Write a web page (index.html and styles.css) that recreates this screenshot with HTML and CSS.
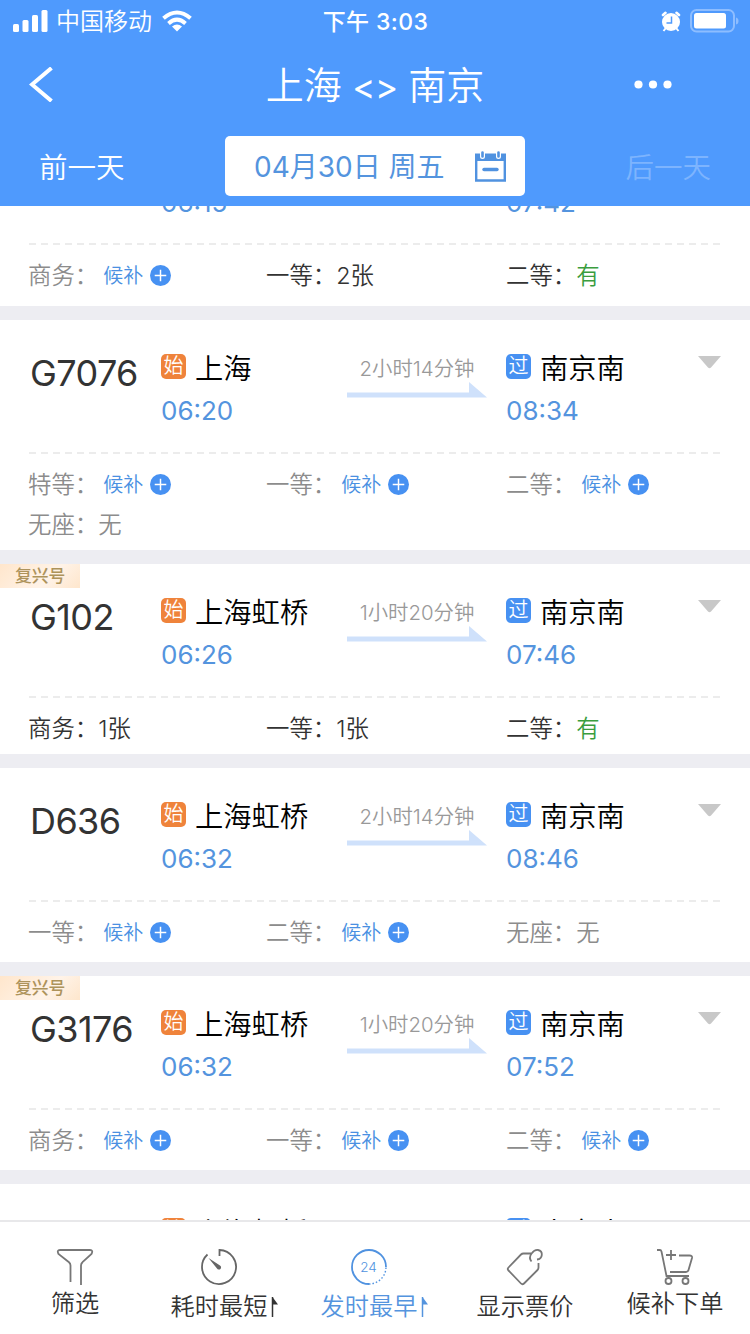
FILE: index.html
```html
<!DOCTYPE html>
<html lang="zh-CN">
<head>
    <meta charset="UTF-8">
    <meta name="viewport" content="width=device-width, initial-scale=1.0">
    <title>上海 - 南京 车票查询</title>
    <link rel="stylesheet" href="styles.css">
</head>
<body>

<!-- 公用图标 -->
<svg class="symbols" width="0" height="0">
    <symbol id="plus" viewBox="0 0 20 20">
        <circle cx="10" cy="10" r="10" fill="#4791f2"/>
        <path d="M10 4.5v11M4.5 10h11" stroke="#fff" stroke-width="1.4"/>
    </symbol>
    <symbol id="arrow" viewBox="0 0 140 16">
        <path d="M0 10.500H122V0L140 15.500H0z" fill="#cfe1fb"/>
    </symbol>
    <symbol id="caret" viewBox="0 0 23 13">
        <path d="M0 0H23L13 11.500Q11.500 13 10 11.500z" fill="#c8c8c8"/>
    </symbol>
    <symbol id="flag" viewBox="0 0 8 22">
        <path d="M1.500 1V21" stroke="currentColor" stroke-width="1.500"/>
        <path d="M1.500 1L7 8.500H1.500z" fill="currentColor"/>
    </symbol>
</svg>

<header class="header">
    <div class="status">
        <div class="status-left">
            <svg width="36" height="24" viewBox="0 0 36 24">
                <g fill="#fff">
                    <rect x="1" y="15" width="6" height="8" rx="1.500"/>
                    <rect x="10.500" y="11" width="6" height="12" rx="1.500"/>
                    <rect x="20" y="6" width="6" height="17" rx="1.500"/>
                    <rect x="29.500" y="1" width="6" height="22" rx="1.500"/>
                </g>
            </svg>
            <span class="carrier">中国移动</span>
            <svg width="30" height="22" viewBox="0 0 30 22">
                <g fill="none" stroke="#fff" stroke-width="4">
                    <path d="M1.500 8.300Q15-3.300 28.500 8.300"/>
                    <path d="M6.500 13.400Q15 6 23.500 13.400"/>
                </g>
                <path d="M10 16.500Q15 12.500 20 16.500L15 21.500z" fill="#fff"/>
            </svg>
        </div>
        <div class="clock">下午 3:03</div>
        <div class="status-right">
            <svg width="20" height="21" viewBox="0 0 20 21">
                <circle cx="10" cy="11" r="9" fill="#fff"/>
                <path d="M2 4L4.500 1.800M18 4L15.500 1.800" stroke="#fff" stroke-width="2.600" stroke-linecap="round"/>
                <path d="M4.500 17.500L2.500 20M15.500 17.500L17.500 20" stroke="#fff" stroke-width="2"/>
                <path d="M10.500 5.500V12H5.500" fill="none" stroke="#4f9afd" stroke-width="1.500"/>
            </svg>
            <svg width="49" height="24" viewBox="0 0 49 24">
                <rect x="1" y="1" width="43" height="21.500" rx="5.500" fill="none" stroke="#8dbdff" stroke-width="2"/>
                <rect x="4" y="4" width="32" height="15.500" rx="2.500" fill="#fff"/>
                <path d="M46 8.500Q48.500 9 48.500 12T46 15.500z" fill="#8dbdff"/>
            </svg>
        </div>
    </div>

    <div class="nav">
        <svg class="back" width="25" height="35" viewBox="0 0 25 35">
            <path d="M22.500 1L3 17.500L22.500 34" fill="none" stroke="#fff" stroke-width="4"/>
        </svg>
        <h1 class="title">上海 <span class="swap">&lt;&gt;</span> 南京</h1>
        <svg class="more" width="38" height="9" viewBox="0 0 38 9">
            <g fill="#fff">
                <circle cx="4.500" cy="4.500" r="4.100"/>
                <circle cx="19" cy="4.500" r="4.100"/>
                <circle cx="33.500" cy="4.500" r="4.100"/>
            </g>
        </svg>
    </div>

    <div class="days">
        <span class="day">前一天</span>
        <div class="date">
            <span class="date-text">04月30日 周五</span>
            <svg width="31" height="31" viewBox="0 0 31 31">
                <path d="M1.200 8V29.500H29.800V8" fill="none" stroke="#5092e0" stroke-width="2.400"/>
                <path d="M0 2.500H31V10H0z" fill="#5092e0"/>
                <path d="M7.500 0V5.500M23.500 0V5.500" stroke="#fff" stroke-width="5" stroke-linecap="round"/>
                <path d="M7.500 1.500V5.500M23.500 1.500V5.500" stroke="#5092e0" stroke-width="2.600" stroke-linecap="round"/>
                <path d="M9 18.500H22" stroke="#5092e0" stroke-width="3.400" stroke-linecap="round"/>
            </svg>
        </div>
        <span class="day disabled">后一天</span>
    </div>
</header>

<main class="list">
    <section class="card first">
        <div class="trip">
            <div class="train"></div>
            <div class="stop">
                <div class="station"></div>
                <div class="time">06:15</div>
            </div>
            <div class="duration"></div>
            <div class="stop">
                <div class="station"></div>
                <div class="time">07:42</div>
            </div>
        </div>
        <svg class="dash" width="692" height="2"><path d="M0 1H692" stroke="#e6e6e6" stroke-width="1.600" stroke-dasharray="7 5"/></svg>
        <div class="seats">
            <div class="seat">商务：<span class="wait">候补</span><svg class="plus"><use href="#plus"/></svg></div>
            <div class="seat has">一等：2张</div>
            <div class="seat has">二等：<span class="yes">有</span></div>
        </div>
    </section>

    <section class="card tight">
        <div class="trip">
            <div class="train">G7076</div>
            <div class="stop">
                <div class="station"><i class="badge start">始</i>上海</div>
                <div class="time">06:20</div>
            </div>
            <div class="duration">2小时14分钟<svg class="arrow"><use href="#arrow"/></svg></div>
            <div class="stop">
                <div class="station"><i class="badge pass">过</i>南京南</div>
                <div class="time">08:34</div>
            </div>
            <svg class="caret"><use href="#caret"/></svg>
        </div>
        <svg class="dash" width="692" height="2"><path d="M0 1H692" stroke="#e6e6e6" stroke-width="1.600" stroke-dasharray="7 5"/></svg>
        <div class="seats">
            <div class="seat">特等：<span class="wait">候补</span><svg class="plus"><use href="#plus"/></svg></div>
            <div class="seat">一等：<span class="wait">候补</span><svg class="plus"><use href="#plus"/></svg></div>
            <div class="seat">二等：<span class="wait">候补</span><svg class="plus"><use href="#plus"/></svg></div>
            <div class="seat">无座：无</div>
        </div>
    </section>

    <section class="card tight">
        <div class="fuxing">复兴号</div>
        <div class="trip">
            <div class="train">G102</div>
            <div class="stop">
                <div class="station"><i class="badge start">始</i>上海虹桥</div>
                <div class="time">06:26</div>
            </div>
            <div class="duration">1小时20分钟<svg class="arrow"><use href="#arrow"/></svg></div>
            <div class="stop">
                <div class="station"><i class="badge pass">过</i>南京南</div>
                <div class="time">07:46</div>
            </div>
            <svg class="caret"><use href="#caret"/></svg>
        </div>
        <svg class="dash" width="692" height="2"><path d="M0 1H692" stroke="#e6e6e6" stroke-width="1.600" stroke-dasharray="7 5"/></svg>
        <div class="seats">
            <div class="seat has">商务：1张</div>
            <div class="seat has">一等：1张</div>
            <div class="seat has">二等：<span class="yes">有</span></div>
        </div>
    </section>

    <section class="card">
        <div class="trip">
            <div class="train">D636</div>
            <div class="stop">
                <div class="station"><i class="badge start">始</i>上海虹桥</div>
                <div class="time">06:32</div>
            </div>
            <div class="duration">2小时14分钟<svg class="arrow"><use href="#arrow"/></svg></div>
            <div class="stop">
                <div class="station"><i class="badge pass">过</i>南京南</div>
                <div class="time">08:46</div>
            </div>
            <svg class="caret"><use href="#caret"/></svg>
        </div>
        <svg class="dash" width="692" height="2"><path d="M0 1H692" stroke="#e6e6e6" stroke-width="1.600" stroke-dasharray="7 5"/></svg>
        <div class="seats">
            <div class="seat">一等：<span class="wait">候补</span><svg class="plus"><use href="#plus"/></svg></div>
            <div class="seat">二等：<span class="wait">候补</span><svg class="plus"><use href="#plus"/></svg></div>
            <div class="seat">无座：无</div>
        </div>
    </section>

    <section class="card">
        <div class="fuxing">复兴号</div>
        <div class="trip">
            <div class="train">G3176</div>
            <div class="stop">
                <div class="station"><i class="badge start">始</i>上海虹桥</div>
                <div class="time">06:32</div>
            </div>
            <div class="duration">1小时20分钟<svg class="arrow"><use href="#arrow"/></svg></div>
            <div class="stop">
                <div class="station"><i class="badge pass">过</i>南京南</div>
                <div class="time">07:52</div>
            </div>
            <svg class="caret"><use href="#caret"/></svg>
        </div>
        <svg class="dash" width="692" height="2"><path d="M0 1H692" stroke="#e6e6e6" stroke-width="1.600" stroke-dasharray="7 5"/></svg>
        <div class="seats">
            <div class="seat">商务：<span class="wait">候补</span><svg class="plus"><use href="#plus"/></svg></div>
            <div class="seat">一等：<span class="wait">候补</span><svg class="plus"><use href="#plus"/></svg></div>
            <div class="seat">二等：<span class="wait">候补</span><svg class="plus"><use href="#plus"/></svg></div>
        </div>
    </section>

    <section class="card">
        <div class="trip">
            <div class="train"></div>
            <div class="stop">
                <div class="station"><i class="badge start">始</i>上海虹桥</div>
            </div>
            <div class="duration"></div>
            <div class="stop">
                <div class="station"><i class="badge pass">过</i>南京南</div>
            </div>
            <svg class="caret"><use href="#caret"/></svg>
        </div>
    </section>
</main>

<footer class="tabs">
    <div class="tab high">
        <svg width="38" height="38" viewBox="0 0 38 38">
            <path d="M14.500 34V17.500Q14.500 15.500 13 14.200L2.500 6Q.5 2 4 2H34Q37.500 2 35.500 6L26.500 14.200Q25 15.500 25 17.500V37" fill="none" stroke="#777" stroke-width="1.800"/>
        </svg>
        <span>筛选</span>
    </div>
    <div class="tab sort">
        <svg width="38" height="38" viewBox="0 0 38 38">
            <path d="M19.500 8V2A17 17 0 1 1 7.500 6.500" fill="none" stroke="#666" stroke-width="1.800"/>
            <path d="M8.500 10L20 17.500A2.200 2.200 0 1 1 17 20.500z" fill="#666"/>
        </svg>
        <span>耗时最短<svg class="flag"><use href="#flag"/></svg></span>
    </div>
    <div class="tab sort active">
        <svg width="38" height="38" viewBox="0 0 38 38">
            <path d="M36 19A17 17 0 1 0 19 36" fill="none" stroke="#5092e0" stroke-width="1.800"/>
            <path d="M19 36A17 17 0 0 0 36 19" fill="none" stroke="#5092e0" stroke-width="1.400" stroke-dasharray="1.500 2"/>
            <text x="18.500" y="24" text-anchor="middle" class="tab-num">24</text>
        </svg>
        <span>发时最早<svg class="flag"><use href="#flag"/></svg></span>
    </div>
    <div class="tab">
        <svg width="38" height="38" viewBox="0 0 38 38">
            <path d="M25 5.500H17.500Q16 5.500 15 6.500L2.500 19.500Q1 21 2.500 22.500L15 35.500Q16.500 37 18 35.500L31.500 22Q32.500 21 32.500 19.500V15" fill="none" stroke="#777" stroke-width="1.800"/>
            <path d="M25.500 13.500C21 8 28 1.500 32 2C37.500 3 37 11 31 11.500" fill="none" stroke="#777" stroke-width="1.800"/>
        </svg>
        <span>显示票价</span>
    </div>
    <div class="tab high">
        <svg width="38" height="38" viewBox="0 0 38 38">
            <g fill="none" stroke="#777" stroke-width="1.800">
                <path d="M1 2H4Q5 2 5.500 3.500L10.500 28H33"/>
                <path d="M23 7.500H33.500Q36.500 7.500 36 10L32.500 22Q32 24 30 24H14"/>
                <path d="M15 2V12M10 7H20"/>
                <circle cx="12.500" cy="33" r="3"/>
                <circle cx="29.500" cy="33" r="3"/>
            </g>
        </svg>
        <span>候补下单</span>
    </div>
</footer>

</body>
</html>
```
FILE: styles.css
```css
* {
    box-sizing: border-box;
}
body {
    font-family: Inter, "Noto Sans CJK SC", sans-serif;
    font-weight: 350;
    margin: 0;
    height: 1334px;
    overflow: hidden;
    display: flex;
    flex-direction: column;
    background-color: #fff;
    color: #333;
}
svg {
    display: block;
    flex: none;
}
.symbols {
    display: none;
}

/* 顶部 */
.header {
    height: 206px;
    flex: none;
    background-color: #4f9afd;
    color: #fff;
}
.status {
    height: 42px;
    padding: 0 11px 0 12px;
    display: grid;
    grid-template-columns: 1fr auto 1fr;
    align-items: center;
}
.status-left {
    display: flex;
    align-items: center;
}
.carrier {
    margin: 0 10px 0 8px;
    padding-top: 1px;
    font-size: 24px;
    line-height: 41px;
}
.clock {
    padding-bottom: 2px;
    font-size: 23px;
    font-weight: 450;
    letter-spacing: 0.4px;
}
.status-right {
    display: flex;
    align-items: center;
    justify-content: flex-end;
    gap: 9px;
}
.nav {
    height: 84px;
    padding: 0 78px 0 29px;
    display: grid;
    grid-template-columns: 49px 1fr auto;
    align-items: center;
}
.title {
    margin: 0;
    padding: 2px 0 0 38px;
    font-size: 38px;
    font-weight: 350;
    line-height: 80px;
    text-align: center;
}
.swap {
    font-size: 35px;
    font-weight: 400;
    letter-spacing: -0.5px;
}
.days {
    height: 80px;
    padding: 10px 40px;
    display: flex;
    align-items: center;
    justify-content: space-between;
}
.day {
    margin: -2px -1px 0;
    font-size: 28.5px;
}
.disabled {
    color: #7db4fe;
}
.date {
    width: 300px;
    height: 60px;
    padding: 0 19px 0 29px;
    display: flex;
    align-items: center;
    justify-content: space-between;
    border-radius: 5px;
    background-color: #fff;
    color: #5494de;
    font-size: 28px;
}
.date-text {
    margin-top: -2px;
    font-weight: 400;
}

/* 车次列表 */
.list {
    height: 1014px;
    flex: none;
    overflow: hidden;
    background-color: #ededf2;
}
.card {
    position: relative;
    margin-bottom: 13.5px;
    padding-bottom: 10px;
    background-color: #fff;
}
.tight {
    padding-bottom: 6px;
}
.first {
    margin-top: -95.5px;
    padding-bottom: 11px;
}
.trip {
    height: 132.5px;
    padding: 0 29px 0 31px;
    display: grid;
    grid-template-columns: 130px 186px 159px 1fr auto;
}
.train {
    margin-left: -1px;
    padding-top: 30px;
    font-size: 36px;
    font-weight: 400;
    line-height: 46px;
    letter-spacing: -0.6px;
    white-space: nowrap;
}
.stop {
    padding-top: 29px;
}
.station {
    height: 40px;
    display: flex;
    align-items: center;
    color: #000;
    font-size: 28.3px;
    line-height: 40px;
}
.badge {
    width: 25px;
    height: 25px;
    margin: -4px 9px 0 0;
    border-radius: 5px;
    color: #fff;
    font-size: 20px;
    font-style: normal;
    line-height: 24px;
    text-align: center;
}
.start {
    background-color: #ef833b;
}
.pass {
    background-color: #4791f2;
}
.time {
    margin-top: 5px;
    color: #5494de;
    font-size: 26px;
    font-weight: 400;
    line-height: 34px;
}
.first .time {
    margin-top: 6px;
}
.duration {
    width: 140px;
    padding-top: 34px;
    color: #999;
    font-size: 20.4px;
    line-height: 30px;
    text-align: center;
}
.arrow {
    width: 140px;
    height: 16px;
    margin-top: -2px;
}
.caret {
    width: 23px;
    height: 13px;
    margin-top: 36px;
}
.dash {
    margin-left: 29px;
}
.seats {
    padding: 10px 0 0 28px;
    display: grid;
    grid-template-columns: 238px 240px 1fr;
}
.seat {
    height: 40px;
    padding-top: 1px;
    display: flex;
    align-items: center;
    color: #8c8c8c;
    font-size: 23.4px;
    line-height: 39px;
}
.has {
    color: #333;
}
.yes {
    color: #3a9d3e;
}
.wait {
    margin: 1px 7px 0 5px;
    color: #4a90e2;
    font-size: 20px;
}
.plus {
    width: 21px;
    height: 21px;
}
.fuxing {
    position: absolute;
    top: 0;
    left: 0;
    width: 80px;
    height: 24px;
    padding: 1px 0 0 15px;
    background: linear-gradient(135deg, #ffe6cc, #fff3e8 60%, #fee6cc);
    color: #ad935b;
    font-size: 16.8px;
    font-weight: 500;
    line-height: 23px;
}

/* 底部工具栏 */
.tabs {
    height: 114px;
    flex: none;
    display: grid;
    grid-template-columns: repeat(5, 1fr);
    border-top: 2px solid #e8e8ea;
}
.tab {
    padding-top: 26px;
    display: flex;
    flex-direction: column;
    align-items: center;
    color: #333;
    font-size: 24.2px;
    line-height: 36px;
}
.tab span {
    margin-top: 3px;
    display: flex;
    align-items: center;
}
.sort > svg {
    margin-right: 13px;
}
.high span {
    margin-top: 0;
}
.active {
    color: #5494de;
}
.tab-num {
    fill: #5092e0;
    font-size: 13.500px;
}
.flag {
    width: 8px;
    height: 22px;
    margin-left: 4px;
}
```
